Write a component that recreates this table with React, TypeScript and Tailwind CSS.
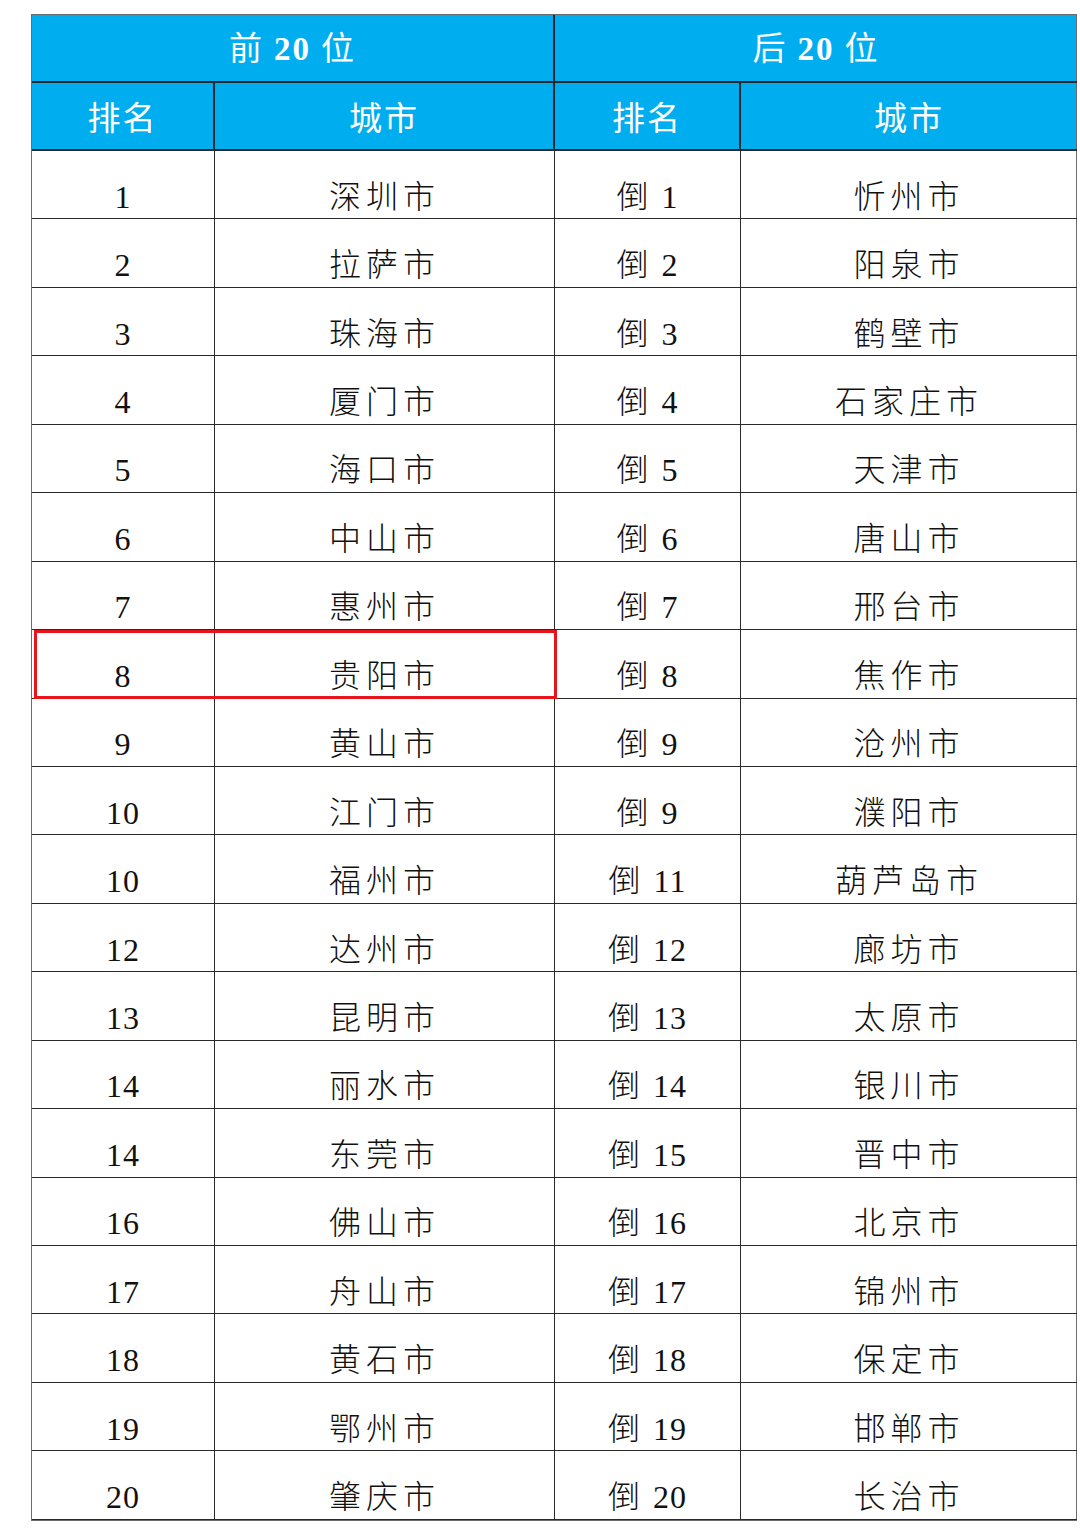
const rows: [string, string, string, string][] = [
  ['1', '深圳市', '倒 1', '忻州市'],
  ['2', '拉萨市', '倒 2', '阳泉市'],
  ['3', '珠海市', '倒 3', '鹤壁市'],
  ['4', '厦门市', '倒 4', '石家庄市'],
  ['5', '海口市', '倒 5', '天津市'],
  ['6', '中山市', '倒 6', '唐山市'],
  ['7', '惠州市', '倒 7', '邢台市'],
  ['8', '贵阳市', '倒 8', '焦作市'],
  ['9', '黄山市', '倒 9', '沧州市'],
  ['10', '江门市', '倒 9', '濮阳市'],
  ['10', '福州市', '倒 11', '葫芦岛市'],
  ['12', '达州市', '倒 12', '廊坊市'],
  ['13', '昆明市', '倒 13', '太原市'],
  ['14', '丽水市', '倒 14', '银川市'],
  ['14', '东莞市', '倒 15', '晋中市'],
  ['16', '佛山市', '倒 16', '北京市'],
  ['17', '舟山市', '倒 17', '锦州市'],
  ['18', '黄石市', '倒 18', '保定市'],
  ['19', '鄂州市', '倒 19', '邯郸市'],
  ['20', '肇庆市', '倒 20', '长治市'],
];

const font = { fontFamily: '"Liberation Serif", "Noto Sans CJK SC", serif' };

function Cell({ children, last, city }: { children: React.ReactNode; last?: boolean; city?: boolean }) {
  return (
    <div
      className={`flex h-[68.45px] items-center justify-center whitespace-pre border-b border-[#2a2a2a] pt-[24px] text-[32px] font-light text-[#111] ${
        last ? '' : 'border-r'
      } ${city ? 'tracking-[5px]' : 'tracking-[1px]'}`}
    >
      {children}
    </div>
  );
}

function Rank({ v }: { v: string }) {
  if (!v.startsWith('倒')) return <>{v}</>;
  return (
    <span>
      倒<span className="ml-[12px]">{v.slice(2)}</span>
    </span>
  );
}

export default function App() {
  return (
    <div className="h-[1539px] w-[1080px] bg-white pl-[31px] pt-[14px]" style={font}>
      <div className="relative w-[1046px] border-[1.5px] border-[#6b6b6b]">
        <div className="grid grid-cols-[523px_522px] bg-[#00aeef] text-white">
          <div className="flex h-[68px] items-center justify-center border-b-2 border-r-2 border-[#1f2a33] pt-[4px] text-[33px] tracking-[2px]">
            前 <b className="mx-[10px] font-bold">20</b> 位
          </div>
          <div className="flex h-[68px] items-center justify-center border-b-2 border-[#1f2a33] pt-[4px] text-[33px] tracking-[2px]">
            后 <b className="mx-[10px] font-bold">20</b> 位
          </div>
        </div>
        <div className="grid grid-cols-[183px_340px_186px_336px] bg-[#00aeef] text-white">
          {['排名', '城市', '排名', '城市'].map((t, i) => (
            <div
              key={i}
              className={`flex h-[68px] items-center justify-center border-b-2 border-[#1f2a33] pt-[8px] text-[33px] tracking-[2px] ${
                i < 3 ? 'border-r-2' : ''
              }`}
            >
              {t}
            </div>
          ))}
        </div>
        <div className="grid grid-cols-[183px_340px_186px_336px]">
          {rows.map((r, i) => (
            <div key={i} className="contents">
              <Cell>{r[0]}</Cell>
              <Cell city>{r[1]}</Cell>
              <Cell>
                <Rank v={r[2]} />
              </Cell>
              <Cell city last>
                {r[3]}
              </Cell>
            </div>
          ))}
        </div>
        <div className="pointer-events-none absolute left-[2px] top-[615px] h-[69px] w-[523px] border-[3px] border-[#e8141c]" />
      </div>
    </div>
  );
}
